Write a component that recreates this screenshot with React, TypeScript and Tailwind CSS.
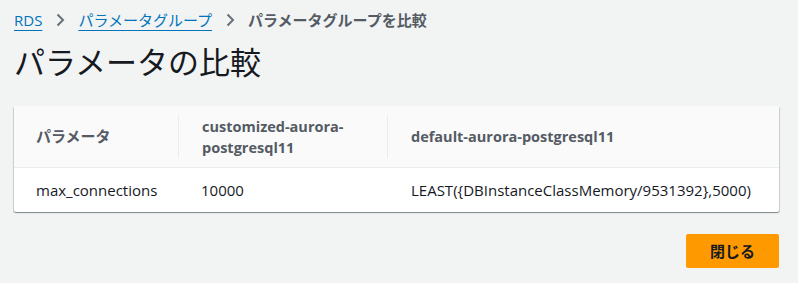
import React from "react";

const font = { fontFamily: '"Open Sans", "Noto Sans CJK JP", sans-serif' };

function Chevron() {
  return (
    <svg width="16" height="16" viewBox="0 0 16 16" className="mx-[10px] shrink-0">
      <path d="M5.5 2.5 L11 8 L5.5 13.5" fill="none" stroke="#687078" strokeWidth="2" />
    </svg>
  );
}

export default function App() {
  return (
    <div className="w-[798px] h-[283px] bg-[#f2f3f3] text-[#16191f]" style={font}>
      <div className="pl-[14px] pt-[9px] pr-[19px]">
        <nav className="flex items-center h-[22px] text-[15px]">
          <a className="text-[#0073bb] underline underline-offset-[4px] decoration-1">RDS</a>
          <Chevron />
          <a className="text-[#0073bb] underline underline-offset-[4px] decoration-1">パラメータグループ</a>
          <Chevron />
          <span className="text-[#545b64] font-bold">パラメータグループを比較</span>
        </nav>
        <h1 className="mt-[13px] text-[31px] leading-[36px] font-normal">パラメータの比較</h1>
        <div className="mt-[26px] bg-white shadow-[0_1px_1px_0_rgba(0,28,36,0.3),1px_1px_1px_0_rgba(0,28,36,0.15),-1px_1px_1px_0_rgba(0,28,36,0.15)] rounded-[2px]">
          <div className="flex bg-[#fafafa] border-b border-[#eaeded] h-[62px] items-center text-[14.5px] font-bold text-[#545b64]">
            <div className="w-[164px] pl-[22px] text-[15px]">パラメータ</div>
            <div className="w-[209px] pl-[23px] border-l border-[#eaeded] h-[43px] flex items-center leading-[21px]">
              customized-aurora-<br />postgresql11
            </div>
            <div className="flex-1 pl-[23px] border-l border-[#eaeded] h-[43px] flex items-center">
              default-aurora-postgresql11
            </div>
          </div>
          <div className="flex h-[44px] items-center text-[15px]">
            <div className="w-[164px] pl-[22px]">max_connections</div>
            <div className="w-[209px] pl-[23px]">10000</div>
            <div className="flex-1 pl-[24px]">LEAST({"{"}DBInstanceClassMemory/9531392{"}"},5000)</div>
          </div>
        </div>
        <div className="flex justify-end mt-[22px]">
          <button className="w-[93px] h-[34px] bg-[#ff9900] rounded-[2px] text-[15px] font-bold text-[#16191f]">閉じる</button>
        </div>
      </div>
    </div>
  );
}
